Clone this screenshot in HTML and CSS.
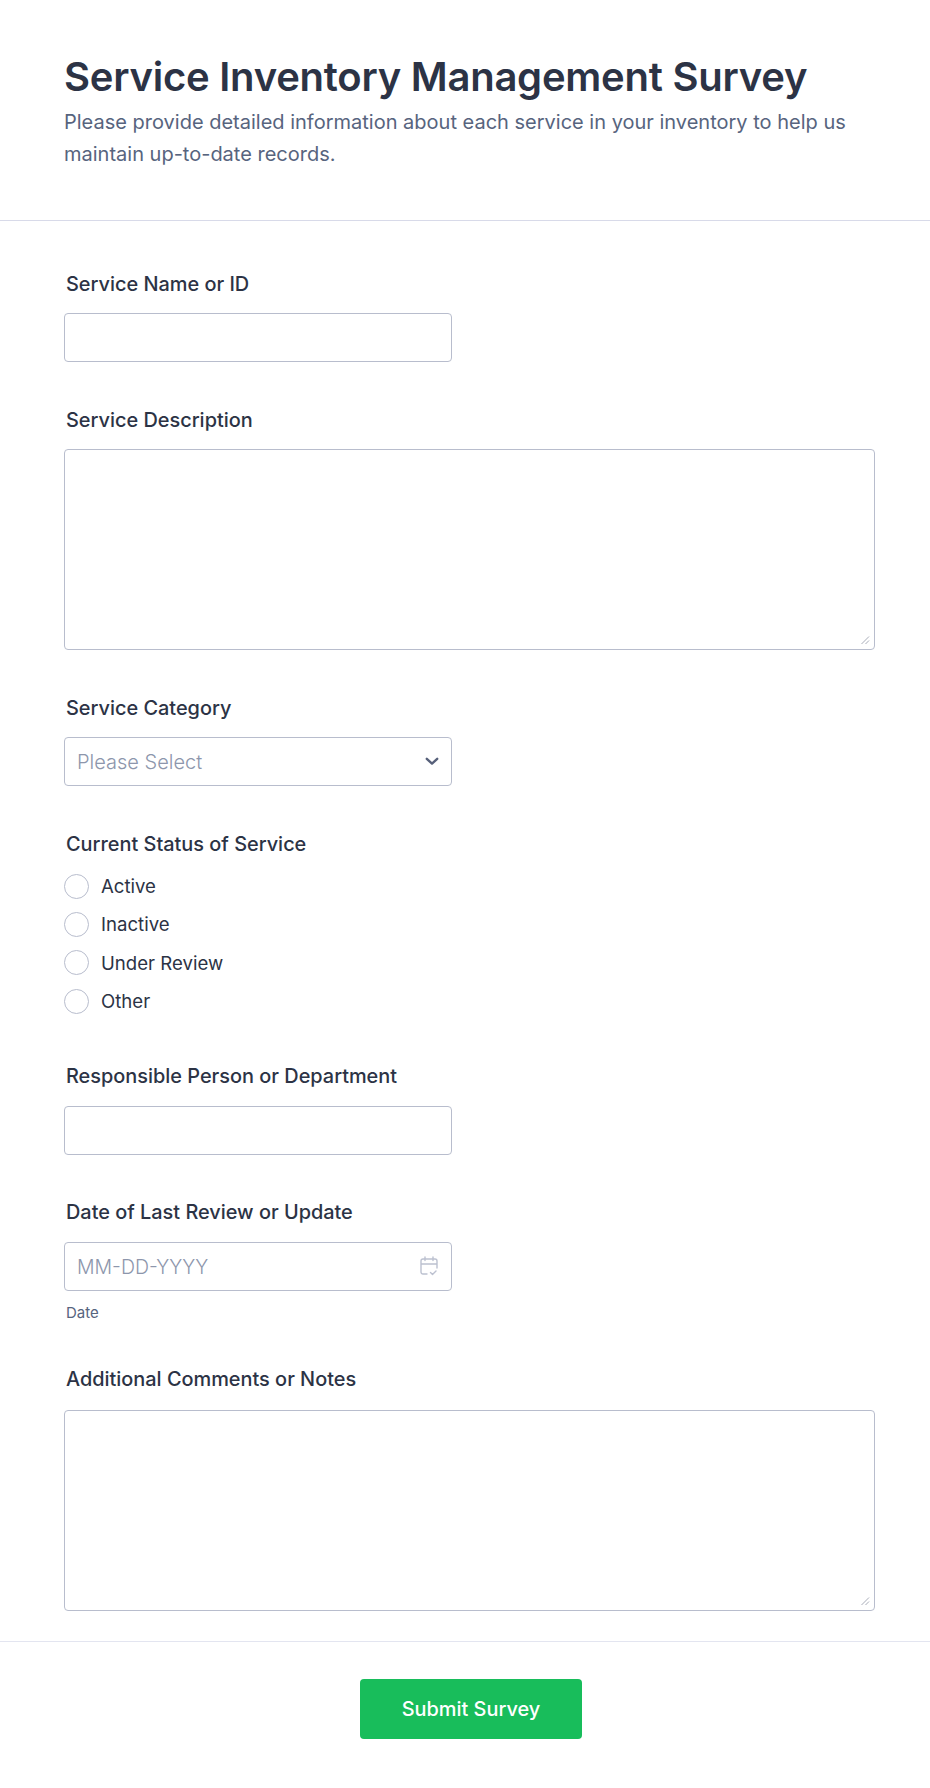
FILE: index.html
```html
<!DOCTYPE html>
<html lang="en">
<head>
<meta charset="utf-8">
<title>Service Inventory Management Survey</title>
<link rel="stylesheet" href="styles.css">
</head>
<body>
<form class="form">
  <header class="form-header">
    <h1 class="form-title">Service Inventory Management Survey</h1>
    <p class="form-subtitle">Please provide detailed information about each service in your inventory to help us maintain up-to-date records.</p>
  </header>
  <div class="form-body">
    <div class="field">
      <label class="field-label" for="name">Service Name or ID</label>
      <input class="control control-short" id="name" type="text">
    </div>
    <div class="field">
      <label class="field-label" for="desc">Service Description</label>
      <textarea class="control control-area" id="desc"></textarea>
    </div>
    <div class="field">
      <label class="field-label" for="cat">Service Category</label>
      <div class="control-wrap">
        <select class="control control-short control-select" id="cat">
          <option>Please Select</option>
        </select>
        <svg class="select-icon" width="14" height="9" viewBox="0 0 14 9" aria-hidden="true"><path d="M1.800 1.800l5.200 4.800 5.200-4.800" fill="none" stroke="#57607a" stroke-width="2.400" stroke-linecap="round" stroke-linejoin="round"/></svg>
      </div>
    </div>
    <div class="field field-radio">
      <span class="field-label">Current Status of Service</span>
      <div class="radio-list">
        <label class="radio"><input class="radio-input" type="radio" name="status"><span>Active</span></label>
        <label class="radio"><input class="radio-input" type="radio" name="status"><span>Inactive</span></label>
        <label class="radio"><input class="radio-input" type="radio" name="status"><span>Under Review</span></label>
        <label class="radio"><input class="radio-input" type="radio" name="status"><span>Other</span></label>
      </div>
    </div>
    <div class="field field-lower field-resp">
      <label class="field-label" for="resp">Responsible Person or Department</label>
      <input class="control control-short" id="resp" type="text">
    </div>
    <div class="field field-lower field-date">
      <label class="field-label" for="date">Date of Last Review or Update</label>
      <div class="control-wrap">
        <input class="control control-short control-date" id="date" type="text" placeholder="MM-DD-YYYY">
        <svg class="date-icon" width="18" height="20" viewBox="0 0 18 20" aria-hidden="true"><path d="M7 18H3a2 2 0 0 1-2-2V5a2 2 0 0 1 2-2h12a2 2 0 0 1 2 2v7M5 1v3.500M13 1v3.500M1 8h16M10.500 16.500l2 2 3.500-3.500" fill="none" stroke="#bcc1d0" stroke-width="1.400" stroke-linecap="round" stroke-linejoin="round"/></svg>
      </div>
      <span class="field-hint">Date</span>
    </div>
    <div class="field field-last">
      <label class="field-label" for="notes">Additional Comments or Notes</label>
      <textarea class="control control-area" id="notes"></textarea>
    </div>
  </div>
  <footer class="form-footer">
    <button class="submit" type="button">Submit Survey</button>
  </footer>
</form>
</body>
</html>
```

FILE: styles.css
```css
* {
  box-sizing: border-box;
}

html, body {
  margin: 0;
  background: #fff;
}

body {
  font-family: Inter, "Liberation Sans", sans-serif;
  color: #2c3345;
}

.form {
  width: 930px;
  height: 1788px;
  overflow: hidden;
}

.form-header {
  height: 221px;
  padding: 52px 64px 0;
  border-bottom: 1px solid #d8dae9;
}

.form-title {
  margin: 0 0 4px;
  font-size: 40px;
  line-height: 50px;
  font-weight: 600;
  letter-spacing: -0.240px;
  color: #2c3345;
}

.form-subtitle {
  margin: 0;
  font-size: 20px;
  line-height: 32px;
  font-weight: 400;
  color: #57647e;
}

.form-body {
  padding: 50px 55px 0 64px;
}

.field {
  margin-bottom: 45px;
}

.field-radio {
  margin-bottom: 49px;
}

.field-resp {
  margin-bottom: 44px;
}

.field-date {
  margin-bottom: 43px;
}

.field-last {
  margin-bottom: 30px;
}

.field-label {
  display: block;
  padding-left: 2px;
  margin-bottom: 15px;
  font-size: 19.900px;
  line-height: 27px;
  font-weight: 500;
  color: #2c3345;
}

.field-lower .field-label {
  margin-bottom: 16px;
}

.field-last .field-label {
  margin-bottom: 17px;
}

.control {
  display: block;
  width: 100%;
  border: 1px solid #b8bdcd;
  border-radius: 4px;
  background: #fff;
  font-family: Inter, "Liberation Sans", sans-serif;
  font-size: 20px;
  color: #2c3345;
  outline: none;
}

.control::placeholder {
  color: #8d96ac;
  font-weight: 300;
  opacity: 1;
}

.control-date::placeholder {
  font-size: 19.500px;
}

.control-short {
  width: 388px;
  height: 49px;
  padding: 0 12px;
}

.control-area {
  height: 201px;
  padding: 8px 12px;
  resize: vertical;
}

.control-area::-webkit-resizer {
  background: url("data:image/svg+xml,%3Csvg xmlns='http://www.w3.org/2000/svg' width='15' height='15'%3E%3Cpath d='M10 2.500L2.500 10M10 6.500L6.500 10' fill='none' stroke='%23a9adb9' stroke-width='1'/%3E%3C/svg%3E") no-repeat;
}

.control-select {
  appearance: none;
  font-weight: 300;
  color: #8d96ac;
}

.control-wrap {
  position: relative;
  width: 388px;
}

.select-icon {
  position: absolute;
  top: 20px;
  right: 13px;
}

.date-icon {
  position: absolute;
  top: 14px;
  right: 14px;
}

.radio-list {
  display: flex;
  flex-direction: column;
  gap: 12.400px;
}

.radio {
  display: flex;
  align-items: center;
  gap: 12px;
  height: 26px;
  font-size: 18.600px;
  color: #2c3345;
}

.radio-input {
  appearance: none;
  flex: none;
  width: 25px;
  height: 25px;
  margin: 0;
  border: 1px solid #b8bdcd;
  border-radius: 50%;
  background: #fff;
}

.field-hint {
  display: block;
  padding-left: 2px;
  margin-top: 12px;
  font-size: 15px;
  line-height: 20px;
  color: #57647e;
}

.form-footer {
  display: flex;
  justify-content: center;
  padding-top: 37px;
  border-top: 1px solid #e3e5f0;
}

.submit {
  width: 222px;
  height: 60px;
  margin-left: 12px;
  border: 0;
  border-radius: 4px;
  background: #18bd5b;
  color: #fff;
  font-family: Inter, "Liberation Sans", sans-serif;
  font-size: 19.900px;
  font-weight: 500;
}
```
